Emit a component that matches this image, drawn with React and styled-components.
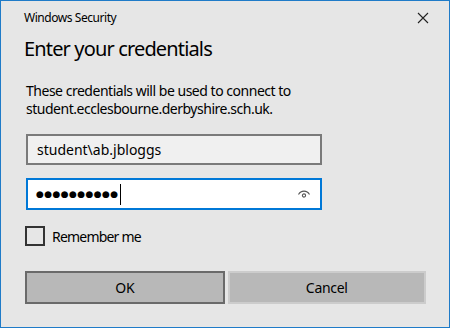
import React from "react";
import styled, { createGlobalStyle } from "styled-components";

const Global = createGlobalStyle`
  html, body { margin: 0; padding: 0; background: #e6e6e6; }
  * { box-sizing: border-box; }
`;

const FONT = `"Noto Sans", "Open Sans", sans-serif`;

const Window = styled.div`
  width: 450px;
  height: 328px;
  border: 1px solid #1f7bc8;
  background: #e6e6e6;
  font-family: ${FONT};
  color: #000;
  display: flex;
  flex-direction: column;
  padding: 0 23px 0 23px;
`;

const TitleBar = styled.div`
  height: 33px;
  display: flex;
  align-items: center;
  justify-content: space-between;
  font-size: 12px;
  letter-spacing: -0.45px;
  color: #000;
`;

const CloseButton = styled.div`
  width: 12px;
  height: 12px;
  margin-right: -3px;
  display: flex;
`;

const Heading = styled.h1`
  margin: 1px 0 0 0;
  font-size: 20px;
  font-weight: 400;
  line-height: 28px;
  letter-spacing: -0.85px;
`;

const Message = styled.p`
  margin: 19px 0 0 2px;
  font-size: 14px;
  line-height: 18px;
  letter-spacing: -0.48px;
`;

const Field = styled.div`
  width: 296px;
  height: ${(p) => (p.$focused ? 32 : 31)}px;
  margin: ${(p) => p.$mt}px 0 0 2px;
  border: ${(p) => (p.$focused ? "2px solid #0078d7" : "2px solid #7a7a7a")};
  background: ${(p) => (p.$focused ? "#ffffff" : "#f0f0f0")};
  display: flex;
  align-items: center;
  padding: 0 ${(p) => (p.$focused ? 8 : 9)}px;
  font-size: 14px;
`;

const Dots = styled.span`
  font-family: "DejaVu Sans", sans-serif;
  font-size: 9px;
  letter-spacing: 0.4px;
  line-height: 1;
`;

const Caret = styled.span`
  width: 1px;
  height: 21px;
  background: #000;
  margin-left: 1px;
`;

const Spacer = styled.span`
  flex: 1;
`;

const EyeIcon = styled.svg`
  width: 14px;
  height: 12px;
  margin-right: 1px;
`;

const CheckRow = styled.label`
  display: flex;
  align-items: center;
  gap: 7px;
  margin: 16px 0 0 1px;
  font-size: 14px;
  letter-spacing: -0.8px;
`;

const Box = styled.span`
  width: 20px;
  height: 20px;
  border: 2px solid #333333;
  background: transparent;
`;

const Buttons = styled.div`
  display: flex;
  gap: 3px;
  margin: 25px 0 0 1px;
`;

const Button = styled.button`
  width: ${(p) => p.$w}px;
  height: 33px;
  border: 2px solid ${(p) => (p.$primary ? "#6a6a6a" : "#cccccc")};
  background: #b8b8b8;
  font-family: ${FONT};
  font-size: 14px;
  letter-spacing: -0.3px;
  color: #000;
  padding: 0;
`;

export default function App() {
  return (
    <>
      <Global />
      <Window>
        <TitleBar>
          <span>Windows Security</span>
          <CloseButton>
            <svg width="12" height="12" viewBox="0 0 12 12">
              <path d="M1 1 L11 11 M11 1 L1 11" stroke="#222" strokeWidth="1.1" fill="none" />
            </svg>
          </CloseButton>
        </TitleBar>
        <Heading>Enter your credentials</Heading>
        <Message>
          These credentials will be used to connect to
          <br />
          student.ecclesbourne.derbyshire.sch.uk.
        </Message>
        <Field $mt={16}>student\ab.jbloggs</Field>
        <Field $mt={13} $focused>
          <Dots>●●●●●●●●●●</Dots>
          <Caret />
          <Spacer />
          <EyeIcon viewBox="0 0 14 12">
            <path d="M1.5 6.5 C4 2 10 2 12.5 6.5" stroke="#555" strokeWidth="1.1" fill="none" />
            <circle cx="7" cy="7.5" r="1.6" stroke="#555" strokeWidth="1.1" fill="none" />
          </EyeIcon>
        </Field>
        <CheckRow>
          <Box />
          Remember me
        </CheckRow>
        <Buttons>
          <Button $w={200} $primary>OK</Button>
          <Button $w={199}>Cancel</Button>
        </Buttons>
      </Window>
    </>
  );
}
